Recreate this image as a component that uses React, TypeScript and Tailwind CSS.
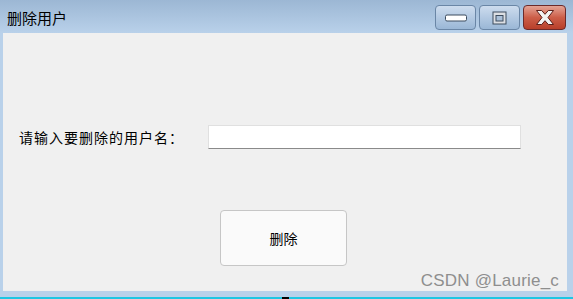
import React from "react";

const CJK = { fontFamily: '"Noto Sans CJK SC", "Noto Sans", sans-serif' };

function CaptionButton({ kind }: { kind: "min" | "max" | "close" }) {
  const isClose = kind === "close";
  return (
    <div
      className={
        "flex h-[25px] items-center justify-center rounded-[4px] border " +
        (isClose
          ? "w-[43px] border-[#6b2a2a] bg-gradient-to-b from-[#e3a395] via-[#cc5e48] to-[#b83f2a]"
          : "w-[41px] border-[#6a86a6] bg-gradient-to-b from-[#cddcee] via-[#b3c9e2] to-[#9ab7d6]")
      }
    >
      {kind === "min" && (
        <svg width="24" height="8" viewBox="0 0 24 8">
          <rect x="1.5" y="1" width="21" height="6" rx="1.5" fill="#ffffff" stroke="#3c4c5e" strokeWidth="1" />
        </svg>
      )}
      {kind === "max" && (
        <svg width="15" height="14" viewBox="0 0 15 14">
          <rect x="1" y="1" width="13" height="12" fill="#dcdfe4" stroke="#3c4c5e" strokeWidth="1" />
          <rect x="4" y="4.5" width="7" height="5.5" fill="#a9bfd8" stroke="#3c4c5e" strokeWidth="1" />
        </svg>
      )}
      {isClose && (
        <svg width="22" height="17" viewBox="0 0 22 17">
          <path
            d="M2.5 1.5h5.2L11 5.3l3.3-3.8h5.2l-5.5 7 5.5 7h-5.2L11 11.7l-3.3 3.8H2.5l5.5-7z"
            fill="#f2f2f2"
            stroke="#5a1d17"
            strokeWidth="1"
            strokeLinejoin="round"
          />
        </svg>
      )}
    </div>
  );
}

export default function App() {
  return (
    <div className="flex h-[299px] w-[573px] flex-col overflow-hidden bg-[#b9d1ea]" style={CJK}>
      {/* title bar */}
      <div className="flex h-[33px] shrink-0 items-start justify-between bg-gradient-to-b from-[#9cb7d4] to-[#b9d1ea]">
        <span className="ml-[7px] mt-[9px] text-[15px] leading-[18px] text-black">删除用户</span>
        <div className="mr-[7px] mt-[5px] flex gap-[3px]">
          <CaptionButton kind="min" />
          <CaptionButton kind="max" />
          <CaptionButton kind="close" />
        </div>
      </div>

      {/* client area */}
      <div className="relative ml-[3px] mr-[6px] h-[258px] shrink-0 bg-[#f0f0f0]">
        <div className="flex items-center pt-[92px]">
          <span className="w-[205px] pl-[16px] text-[14px] leading-[24px] tracking-[1px] text-black">
            请输入要删除的用户名：
          </span>
          <div className="h-[24px] w-[313px] border border-[#e0e0e0] border-b-[#8a8a8a] bg-white" />
        </div>
        <div className="ml-[217px] mt-[61px] flex h-[56px] w-[127px] items-center justify-center rounded-[4px] border border-[#c6c6c6] bg-[#fafafa] text-[14px] text-black">
          删除
        </div>
        <span
          className="absolute bottom-[0px] right-[8px] text-[17px] leading-[20px] tracking-[0.2px] text-[#8e8e8e]"
          style={{ fontFamily: '"Liberation Sans", Arial, sans-serif' }}
        >
          CSDN @Laurie_c
        </span>
      </div>

      {/* bottom frame */}
      <div className="h-[6px] shrink-0" />
      <div className="relative h-[2px] shrink-0 bg-[#1ec6e3]">
        <div className="absolute left-[282px] top-0 h-[2px] w-[7px] bg-black" />
      </div>
    </div>
  );
}
